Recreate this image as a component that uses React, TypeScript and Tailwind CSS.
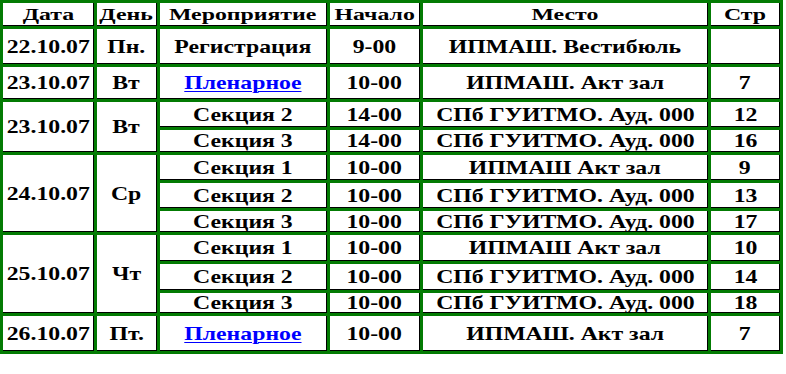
import React from 'react';

type Row = {
  date?: string;
  day?: string;
  span?: number;
  event: string;
  link?: boolean;
  start: string;
  place: string;
  page: string;
  h: string;
};

const rows: Row[] = [
  { date: '22.10.07', day: 'Пн.', span: 1, event: 'Регистрация', start: '9-00', place: 'ИПМАШ. Вестибюль', page: '', h: 'h-[35px]' },
  { date: '23.10.07', day: 'Вт', span: 1, event: 'Пленарное', link: true, start: '10-00', place: 'ИПМАШ. Акт зал', page: '7', h: 'h-[32px]' },
  { date: '23.10.07', day: 'Вт', span: 2, event: 'Секция 2', start: '14-00', place: 'СПб ГУИТМО. Ауд. 000', page: '12', h: 'h-[25px]' },
  { event: 'Секция 3', start: '14-00', place: 'СПб ГУИТМО. Ауд. 000', page: '16', h: 'h-[22px]' },
  { date: '24.10.07', day: 'Ср', span: 3, event: 'Секция 1', start: '10-00', place: 'ИПМАШ Акт зал', page: '9', h: 'h-[25px]' },
  { event: 'Секция 2', start: '10-00', place: 'СПб ГУИТМО. Ауд. 000', page: '13', h: 'h-[25px]' },
  { event: 'Секция 3', start: '10-00', place: 'СПб ГУИТМО. Ауд. 000', page: '17', h: 'h-[21px]' },
  { date: '25.10.07', day: 'Чт', span: 3, event: 'Секция 1', start: '10-00', place: 'ИПМАШ Акт зал', page: '10', h: 'h-[26px]' },
  { event: 'Секция 2', start: '10-00', place: 'СПб ГУИТМО. Ауд. 000', page: '14', h: 'h-[26px]' },
  { event: 'Секция 3', start: '10-00', place: 'СПб ГУИТМО. Ауд. 000', page: '18', h: 'h-[20px]' },
  { date: '26.10.07', day: 'Пт.', span: 1, event: 'Пленарное', link: true, start: '10-00', place: 'ИПМАШ. Акт зал', page: '7', h: 'h-[35px]' },
];

const cell = 'bg-white border-r border-b border-black p-0 text-center align-middle leading-none';

const T: React.FC<{ children: React.ReactNode; head?: boolean; link?: boolean }> = ({ children, head, link }) => (
  <span
    className={`inline-block align-middle leading-none whitespace-nowrap ${
      head ? 'text-[17px] scale-x-140' : 'text-[19px] scale-x-125'
    } ${link ? 'text-[#0000ff] underline decoration-1 underline-offset-2' : ''}`}
  >
    {children}
  </span>
);

export default function App() {
  return (
    <div className="bg-white w-[786px] h-[374px] font-['Liberation_Serif','Times_New_Roman',serif] font-bold text-black">
      <table className="table-fixed border-separate border-spacing-[3px] bg-[#037b03] w-[783px]">
        <colgroup>
          <col className="w-[91px]" />
          <col className="w-[60px]" />
          <col className="w-[167px]" />
          <col className="w-[90px]" />
          <col className="w-[285px]" />
          <col className="w-[69px]" />
        </colgroup>
        <thead>
          <tr>
            {['Дата', 'День', 'Мероприятие', 'Начало', 'Место', 'Стр'].map((t) => (
              <th key={t} className={`${cell} h-[23px] font-bold`}>
                <T head>{t}</T>
              </th>
            ))}
          </tr>
        </thead>
        <tbody>
          {rows.map((r, i) => (
            <tr key={i}>
              {r.date && (
                <>
                  <td rowSpan={r.span} className={cell}><T>{r.date}</T></td>
                  <td rowSpan={r.span} className={cell}><T>{r.day}</T></td>
                </>
              )}
              <td className={`${cell} ${r.h}`}>
                {r.link ? (
                  <a href="#"><T link>{r.event}</T></a>
                ) : (
                  <T>{r.event}</T>
                )}
              </td>
              <td className={cell}><T>{r.start}</T></td>
              <td className={cell}><T>{r.place}</T></td>
              <td className={cell}><T>{r.page}</T></td>
            </tr>
          ))}
        </tbody>
      </table>
    </div>
  );
}
